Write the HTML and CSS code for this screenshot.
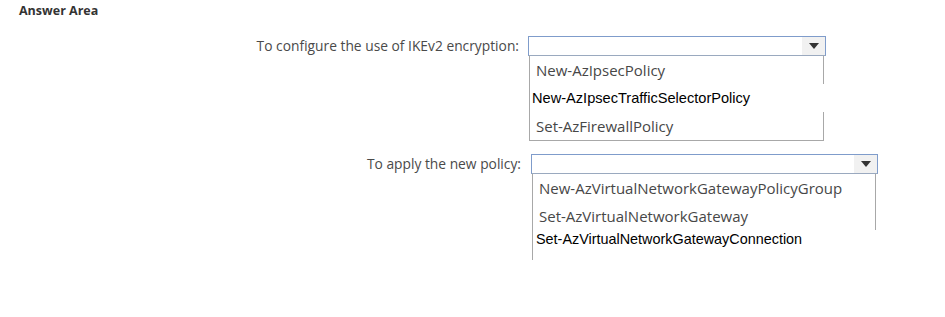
FILE: index.html
```html
<!DOCTYPE html>
<html lang="en">
<head>
    <meta charset="UTF-8">
    <title>Answer Area</title>
    <link rel="stylesheet" href="styles.css">
</head>
<body>
    <div class="answer-area">
        <h2 class="title">Answer Area</h2>

        <div class="question q-first">
            <div class="q-label">To configure the use of IKEv2 encryption:</div>
            <div class="combo">
                <div class="combo-box">
                    <span class="combo-value"></span>
                    <span class="combo-arrow"></span>
                </div>
                <ul class="combo-list">
                    <li>New-AzIpsecPolicy</li>
                    <li class="pasted">New-AzIpsecTrafficSelectorPolicy</li>
                    <li>Set-AzFirewallPolicy</li>
                </ul>
            </div>
        </div>

        <div class="question q-second">
            <div class="q-label">To apply the new policy:</div>
            <div class="combo">
                <div class="combo-box">
                    <span class="combo-value"></span>
                    <span class="combo-arrow"></span>
                </div>
                <ul class="combo-list open-end">
                    <li>New-AzVirtualNetworkGatewayPolicyGroup</li>
                    <li>Set-AzVirtualNetworkGateway</li>
                    <li class="pasted last">Set-AzVirtualNetworkGatewayConnection</li>
                </ul>
            </div>
        </div>
    </div>
</body>
</html>
```

FILE: styles.css
```css
body {
    margin: 0;
    padding: 0;
    background: #fff;
    font-family: "Open Sans", "Noto Sans", sans-serif;
    color: #4a4a4a;
}

.answer-area {
    padding: 3px 0 0 19px;
}

.title {
    margin: 0;
    font-size: 12.5px;
    font-weight: 700;
    color: #333;
    line-height: 16px;
}

.question {
    display: flex;
    align-items: flex-start;
}

.q-first {
    margin-top: 17px;
}

.q-second {
    margin-top: 13px;
}

.q-label {
    text-align: right;
    font-size: 13.8px;
    line-height: 20px;
}

.q-first .q-label {
    width: 500px;
    padding-right: 9px;
}

.q-second .q-label {
    width: 502px;
    padding-right: 10px;
}

.q-first .combo {
    width: 298px;
}

.q-second .combo {
    width: 347px;
}

.combo-box {
    display: flex;
    height: 18px;
    border: 1px solid #7f9ccb;
    border-bottom-color: #9aa9bf;
    background: #fff;
}

.combo-value {
    flex: 1;
}

.combo-arrow {
    width: 23px;
    background: #f1f1f1;
    display: flex;
    align-items: center;
    justify-content: center;
}

.combo-arrow::after {
    content: "";
    border-left: 5px solid transparent;
    border-right: 5px solid transparent;
    border-top: 6px solid #333;
}

.combo-list {
    list-style: none;
    margin: 0 2px 0 1px;
    padding: 0;
    border: 1px solid #a8a8a8;
    border-top: none;
}

.combo-list li {
    height: 28px;
    line-height: 28px;
    padding-left: 6px;
    font-size: 15px;
    color: #474747;
    white-space: nowrap;
}

.combo-list li.pasted {
    font-family: "Liberation Sans", Arial, sans-serif;
    font-size: 14.6px;
    color: #000;
    background: #fff;
    padding-left: 2px;
    margin-right: -11px;
    position: relative;
}

.combo-list.open-end {
    border-right: none;
    border-bottom: none;
}

.combo-list.open-end li {
    border-right: 1px solid #a8a8a8;
}

.combo-list.open-end li.pasted {
    border-right: none;
    margin-right: -29px;
    padding-left: 3px;
    height: 30px;
    line-height: 18px;
    font-size: 14.4px;
}
```
